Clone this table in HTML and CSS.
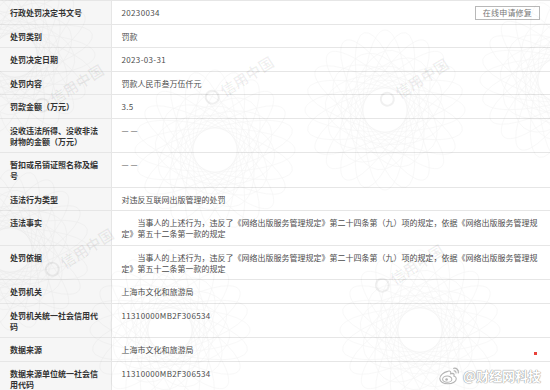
FILE: index.html
```html
<!DOCTYPE html>
<html lang="zh-CN">
<head>
<meta charset="utf-8">
<title>行政处罚信息</title>
<link rel="stylesheet" href="styles.css">
</head>
<body>
<div class="page">
  <table class="record">
    <colgroup><col class="col-label"><col class="col-value"></colgroup>
    <tr>
      <th>行政处罚决定书文号</th>
      <td><div class="first-row"><span class="num">20230034</span><span class="fix-btn">在线申请修复</span></div></td>
    </tr>
    <tr><th>处罚类别</th><td>罚款</td></tr>
    <tr><th>处罚决定日期</th><td class="num">2023-03-31</td></tr>
    <tr><th>处罚内容</th><td>罚款人民币叁万伍仟元</td></tr>
    <tr><th>罚款金额（万元）</th><td class="num">3.5</td></tr>
    <tr><th>没收违法所得、没收非法财物的金额（万元）</th><td>— —</td></tr>
    <tr><th>暂扣或吊销证照名称及编号</th><td>— —</td></tr>
    <tr><th>违法行为类型</th><td>对违反互联网出版管理的处罚</td></tr>
    <tr><th>违法事实</th><td class="para">当事人的上述行为，违反了《网络出版服务管理规定》第二十四条第（九）项的规定，依据《网络出版服务管理规定》第五十二条第一款的规定</td></tr>
    <tr><th>处罚依据</th><td class="para">当事人的上述行为，违反了《网络出版服务管理规定》第二十四条第（九）项的规定，依据《网络出版服务管理规定》第五十二条第一款的规定</td></tr>
    <tr><th>处罚机关</th><td>上海市文化和旅游局</td></tr>
    <tr><th>处罚机关统一社会信用代码</th><td class="num">11310000MB2F306534</td></tr>
    <tr><th>数据来源</th><td>上海市文化和旅游局</td></tr>
    <tr><th>数据来源单位统一社会信用代码</th><td class="num">11310000MB2F306534</td></tr>
  </table>

  <svg class="guilloche" width="550" height="390" viewBox="0 0 550 390" aria-hidden="true">
    <defs>
      <g id="rose">
        <ellipse rx="80" ry="22" transform="rotate(0)"/>
        <ellipse rx="80" ry="22" transform="rotate(15)"/>
        <ellipse rx="80" ry="22" transform="rotate(30)"/>
        <ellipse rx="80" ry="22" transform="rotate(45)"/>
        <ellipse rx="80" ry="22" transform="rotate(60)"/>
        <ellipse rx="80" ry="22" transform="rotate(75)"/>
        <ellipse rx="80" ry="22" transform="rotate(90)"/>
        <ellipse rx="80" ry="22" transform="rotate(105)"/>
        <ellipse rx="80" ry="22" transform="rotate(120)"/>
        <ellipse rx="80" ry="22" transform="rotate(135)"/>
        <ellipse rx="80" ry="22" transform="rotate(150)"/>
        <ellipse rx="80" ry="22" transform="rotate(165)"/>
        <ellipse rx="60" ry="34" transform="rotate(7)"/>
        <ellipse rx="60" ry="34" transform="rotate(37)"/>
        <ellipse rx="60" ry="34" transform="rotate(67)"/>
        <ellipse rx="60" ry="34" transform="rotate(97)"/>
        <ellipse rx="60" ry="34" transform="rotate(127)"/>
        <ellipse rx="60" ry="34" transform="rotate(157)"/>
        <circle r="30"/>
        <circle r="44"/>
      </g>
    </defs>
    <use href="#rose" x="385" y="110"/>
    <use href="#rose" x="15" y="55"/>
    <use href="#rose" x="560" y="80"/>
    <use href="#rose" x="420" y="330"/>
    <use href="#rose" x="170" y="330"/>
    <use href="#rose" x="10" y="250"/>
    <use href="#rose" x="215" y="150"/>
  </svg>

  <div class="wm wm-a"><span class="wm-logo"></span>信用中国</div>
  <div class="wm wm-b"><span class="wm-logo"></span>信用中国</div>
  <div class="wm wm-c"><span class="wm-logo"></span>信用中国</div>
  <div class="wm wm-d"><span class="wm-logo"></span>信用中国</div>
  <div class="wm wm-e"><span class="wm-logo"></span>信用中国</div>

  <div class="weibo">
    <svg class="weibo-logo" width="24" height="21" viewBox="0 0 26 22" aria-hidden="true">
      <path d="M10.5 6.5c-4.5 1-8.5 4.5-8.5 8 0 3.5 4.2 5.5 8.6 5.5 5.4 0 9.2-2.8 9.2-5.6 0-1.6-1.4-2.4-2.6-2.8.6-1.6.2-2.8-1.5-2.9-1 0-2 .4-2 .4s.6-1.8-.4-2.6c-.6-.5-1.6-.4-2.8 0z" fill="#fff" stroke="#b3b3b3" stroke-width="1.2"/>
      <ellipse cx="10" cy="15" rx="5" ry="3.4" fill="#fff" stroke="#b3b3b3" stroke-width="1.1"/>
      <circle cx="9.3" cy="15.3" r="1.4" fill="#b3b3b3"/>
      <path d="M17 3.2c3-.6 5.6 1.8 5 5" fill="none" stroke="#b3b3b3" stroke-width="1.3" stroke-linecap="round"/>
      <path d="M17.4 6c1.3-.2 2.3.8 2.1 2.1" fill="none" stroke="#b3b3b3" stroke-width="1.2" stroke-linecap="round"/>
    </svg>
    <span class="weibo-name">@财经网科技</span>
    <span class="weibo-dot"></span>
  </div>
</div>
</body>
</html>
```

FILE: styles.css
```css
html, body {
  margin: 0;
  padding: 0;
  background: #ffffff;
}

.page {
  position: relative;
  width: 550px;
  height: 390px;
  overflow: hidden;
  font-family: "Noto Sans CJK SC", "Noto Sans", sans-serif;
  font-size: 8px;
}

.record {
  width: 550px;
  table-layout: fixed;
  border-collapse: collapse;
  border-top: 1px solid #e6e6e6;
}

.col-label {
  width: 111px;
}

.record th,
.record td {
  padding: 6px 10px 5.5px 10px;
  line-height: 11px;
  vertical-align: top;
  border-bottom: 1px solid #e6e6e6;
  word-break: break-all;
}

.record th {
  text-align: left;
  font-weight: bold;
  color: #333333;
  background: #f6f6f6;
  border-right: 1px solid #e6e6e6;
}

.record td {
  color: #4d4d4d;
  font-weight: normal;
}

.num {
  letter-spacing: 0.35px;
}

.para {
  text-indent: 16px;
}

.first-row {
  display: flex;
  align-items: center;
  justify-content: space-between;
}

.fix-btn {
  display: block;
  margin: -1.5px 0 -1.5px 0;
  padding: 0 7px;
  height: 12px;
  line-height: 12px;
  border: 1px solid #b8b8b8;
  color: #777777;
  background: #ffffff;
  letter-spacing: 0.2px;
}

.guilloche {
  position: absolute;
  left: 0;
  top: 0;
  pointer-events: none;
  fill: none;
  stroke: #000000;
  stroke-width: 0.5;
  opacity: 0.045;
}

.wm {
  position: absolute;
  display: flex;
  align-items: center;
  gap: 3px;
  font-size: 15px;
  font-weight: bold;
  color: rgba(0, 0, 0, 0.06);
  transform: rotate(-32deg);
  pointer-events: none;
  white-space: nowrap;
}

.wm-logo {
  width: 11px;
  height: 11px;
  border: 2px solid rgba(0, 0, 0, 0.06);
  border-radius: 50%;
}

.wm-a { left: 30px; top: 78px; }
.wm-b { left: 200px; top: 70px; }
.wm-c { left: 375px; top: 72px; }
.wm-d { left: 40px; top: 242px; }
.wm-e { left: 370px; top: 258px; }

.weibo {
  position: absolute;
  left: 438px;
  top: 365px;
  display: flex;
  align-items: center;
  gap: 1px;
}

.weibo-name {
  font-size: 13px;
  line-height: 18px;
  font-weight: bold;
  color: #ffffff;
  text-shadow: 0 0 1px #8a8a8a, 0 0 1px #8a8a8a;
}

.weibo-dot {
  position: absolute;
  right: 4px;
  top: -13px;
  width: 3px;
  height: 3px;
  background: #e8423b;
}
```
